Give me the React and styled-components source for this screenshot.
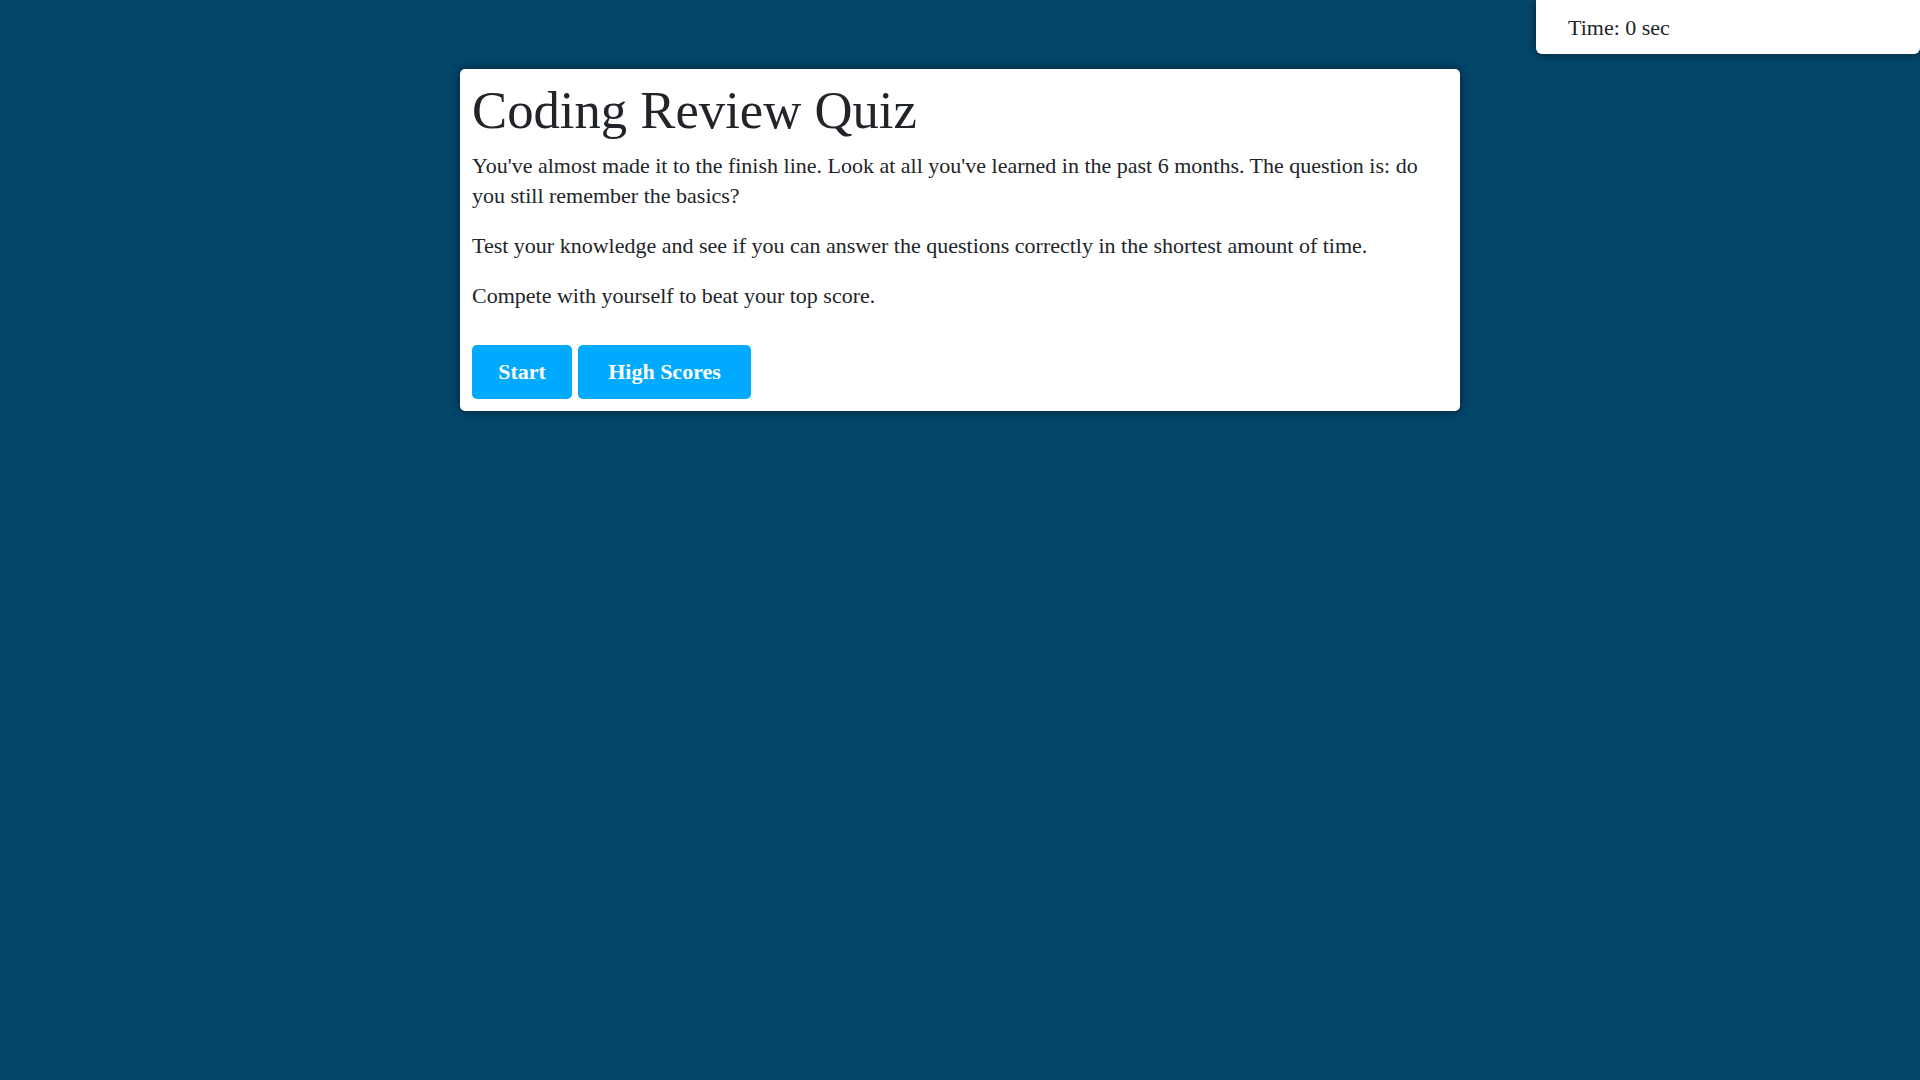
import React from "react";
import styled, { createGlobalStyle } from "styled-components";

const Global = createGlobalStyle`
  html, body {
    margin: 0;
    padding: 0;
    background: #03466a;
    min-height: 100%;
  }
  body {
    font-family: "Liberation Serif", "Times New Roman", serif;
    color: #212529;
  }
`;

const Page = styled.div`
  min-height: 1080px;
  background: #03466a;
`;

const Header = styled.header`
  display: flex;
  justify-content: flex-end;
`;

const Timer = styled.div`
  width: 384px;
  height: 54px;
  box-sizing: border-box;
  padding: 2px 0 0 32px;
  display: flex;
  align-items: center;
  background: #fff;
  border-radius: 0 0 6px 6px;
  box-shadow: 0 0 10px rgba(0, 0, 0, 0.55);
  font-size: 22px;
  color: #212529;
`;

const Card = styled.main`
  width: 1000px;
  box-sizing: border-box;
  margin: 15px auto 0;
  padding: 12px;
  background: #fff;
  border-radius: 5px;
  box-shadow: 0 0 10px rgba(0, 0, 0, 0.6);
`;

const Title = styled.h1`
  margin: 0 0 12px;
  font-size: 52.7px;
  font-weight: 400;
  line-height: 58px;
  color: #212529;
`;

const Text = styled.p`
  margin: 0 0 20px;
  font-size: 22px;
  line-height: 30px;
  color: #212529;
`;

const Buttons = styled.div`
  display: flex;
  gap: 6px;
  padding-top: 14px;
`;

const Button = styled.button`
  height: 54px;
  padding: 0 20px;
  border: none;
  border-radius: 5px;
  background: #00aaff;
  color: #fff;
  font-family: inherit;
  font-weight: 700;
  font-size: 22px;
  min-width: ${(p) => p.$w}px;
  cursor: pointer;
`;

export default function App() {
  return (
    <Page>
      <Global />
      <Header>
        <Timer>Time: 0 sec</Timer>
      </Header>
      <Card>
        <Title>Coding Review Quiz</Title>
        <Text>
          You've almost made it to the finish line. Look at all you've learned in the past 6 months. The question is: do you still remember the basics?
        </Text>
        <Text>
          Test your knowledge and see if you can answer the questions correctly in the shortest amount of time.
        </Text>
        <Text>Compete with yourself to beat your top score.</Text>
        <Buttons>
          <Button $w={100}>Start</Button>
          <Button $w={173}>High Scores</Button>
        </Buttons>
      </Card>
    </Page>
  );
}
